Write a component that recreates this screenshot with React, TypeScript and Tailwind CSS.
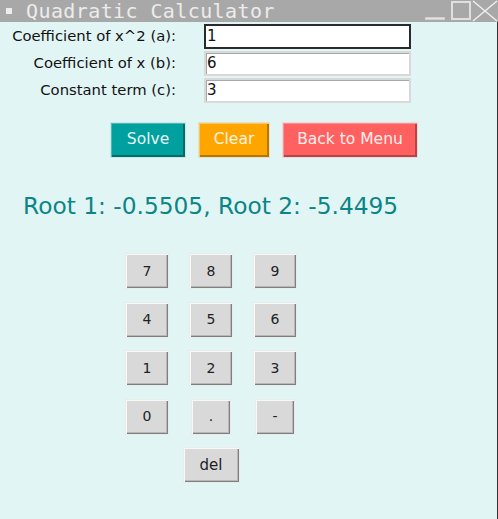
import React from "react";

const keyBase =
  "h-[36px] border border-[#e9ecec] bg-[#d9d9d9] text-[14px] text-[#222] shadow-[inset_1px_1px_0_#f8f8f8,inset_-1px_-1px_0_#7f7f7f,inset_-2px_-2px_0_#b8b8b8] flex items-center justify-center";

const Key: React.FC<{ label: string; className?: string }> = ({
  label,
  className = "w-[44px]",
}) => <button className={`${keyBase} ${className}`}>{label}</button>;

const fields = [
  { label: "Coefficient of x^2 (a):", value: "1", focus: true },
  { label: "Coefficient of x (b):", value: "6", focus: false },
  { label: "Constant term (c):", value: "3", focus: false },
];

export default function App() {
  return (
    <div className="w-[498px] h-[519px] flex flex-col bg-[#e2f5f5] font-['DejaVu_Sans',sans-serif] overflow-hidden">
      {/* title bar */}
      <div className="h-[22px] shrink-0 bg-[#a8a8a8] flex items-center">
        <span className="ml-[6px] w-[6px] h-[6px] bg-[#eeeeee]" />
        <span className="ml-[14px] font-['DejaVu_Sans_Mono',monospace] text-[20px] leading-none tracking-[0.4px] text-[#ececec]">
          Quadratic Calculator
        </span>
        <div className="ml-auto flex items-end h-full">
          <span className="mb-[2px] w-[20px] h-[3px] bg-[#e6e6e6] border border-[#cfcfcf]" />
          <span className="ml-[6px] mb-[2px] w-[20px] h-[19px] border-2 border-[#e0e0e0]" />
          <svg width="26" height="22" viewBox="0 0 26 22" className="ml-[1px]">
            <path d="M1 1 L25 21 M25 1 L1 21" stroke="#eeeeee" strokeWidth="1.5" />
          </svg>
        </div>
      </div>

      <div className="flex-1 flex flex-col border-r border-[#333]">
        {/* inputs */}
        <div className="mt-[2px] flex flex-col gap-[2px]">
          {fields.map((f) => (
            <div key={f.label} className="flex items-center">
              <span className="w-[176px] text-right text-[14.8px] leading-none text-[#111] whitespace-nowrap">
                {f.label}
              </span>
              <div
                className={`ml-[28px] w-[207px] h-[25px] bg-white flex items-center pl-[1px] text-[15px] text-[#111] ${
                  f.focus
                    ? "border-2 border-[#2a2a2a]"
                    : "border-2 border-[#d9d9d9] shadow-[inset_1px_1px_0_#a8a8a8]"
                }`}
              >
                {f.value}
              </div>
            </div>
          ))}
        </div>

        {/* actions */}
        <div className="mt-[19px] ml-[110px] flex gap-[12px]">
          <button className="w-[76px] h-[36px] border border-[#d6e2e2] bg-[#00a09e] text-[15.5px] text-[#e8f4f4] shadow-[inset_1px_1px_0_#3ec0bd,inset_-2px_-2px_0_#006f6c]">
            Solve
          </button>
          <button className="w-[72px] h-[36px] border border-[#e0e0d8] bg-[#ffa500] text-[15.5px] text-[#fff4e0] shadow-[inset_1px_1px_0_#ffc850,inset_-2px_-2px_0_#b87600]">
            Clear
          </button>
          <button className="w-[136px] h-[36px] border border-[#e4dcdc] bg-[#ff6060] text-[15.5px] text-[#fff0f0] shadow-[inset_1px_1px_0_#ff9090,inset_-2px_-2px_0_#b84444]">
            Back to Menu
          </button>
        </div>

        {/* result */}
        <div className="mt-[35px] ml-[23px] text-[23.3px] leading-[26px] text-[#0b8585] whitespace-nowrap">
          Root 1: -0.5505, Root 2: -5.4495
        </div>

        {/* keypad */}
        <div className="mt-[34px] ml-[125px] grid grid-cols-[44px_44px_44px] gap-x-[20px] gap-y-[12.5px] justify-items-center">
          {["7", "8", "9", "4", "5", "6", "1", "2", "3", "0"].map((k) => (
            <Key key={k} label={k} />
          ))}
          <Key label="." className="w-[40px]" />
          <Key label="-" className="w-[40px]" />
          <div className="col-span-3 w-full flex justify-center">
            <Key label="del" className="w-[57px] text-[15px]" />
          </div>
        </div>
      </div>
    </div>
  );
}
